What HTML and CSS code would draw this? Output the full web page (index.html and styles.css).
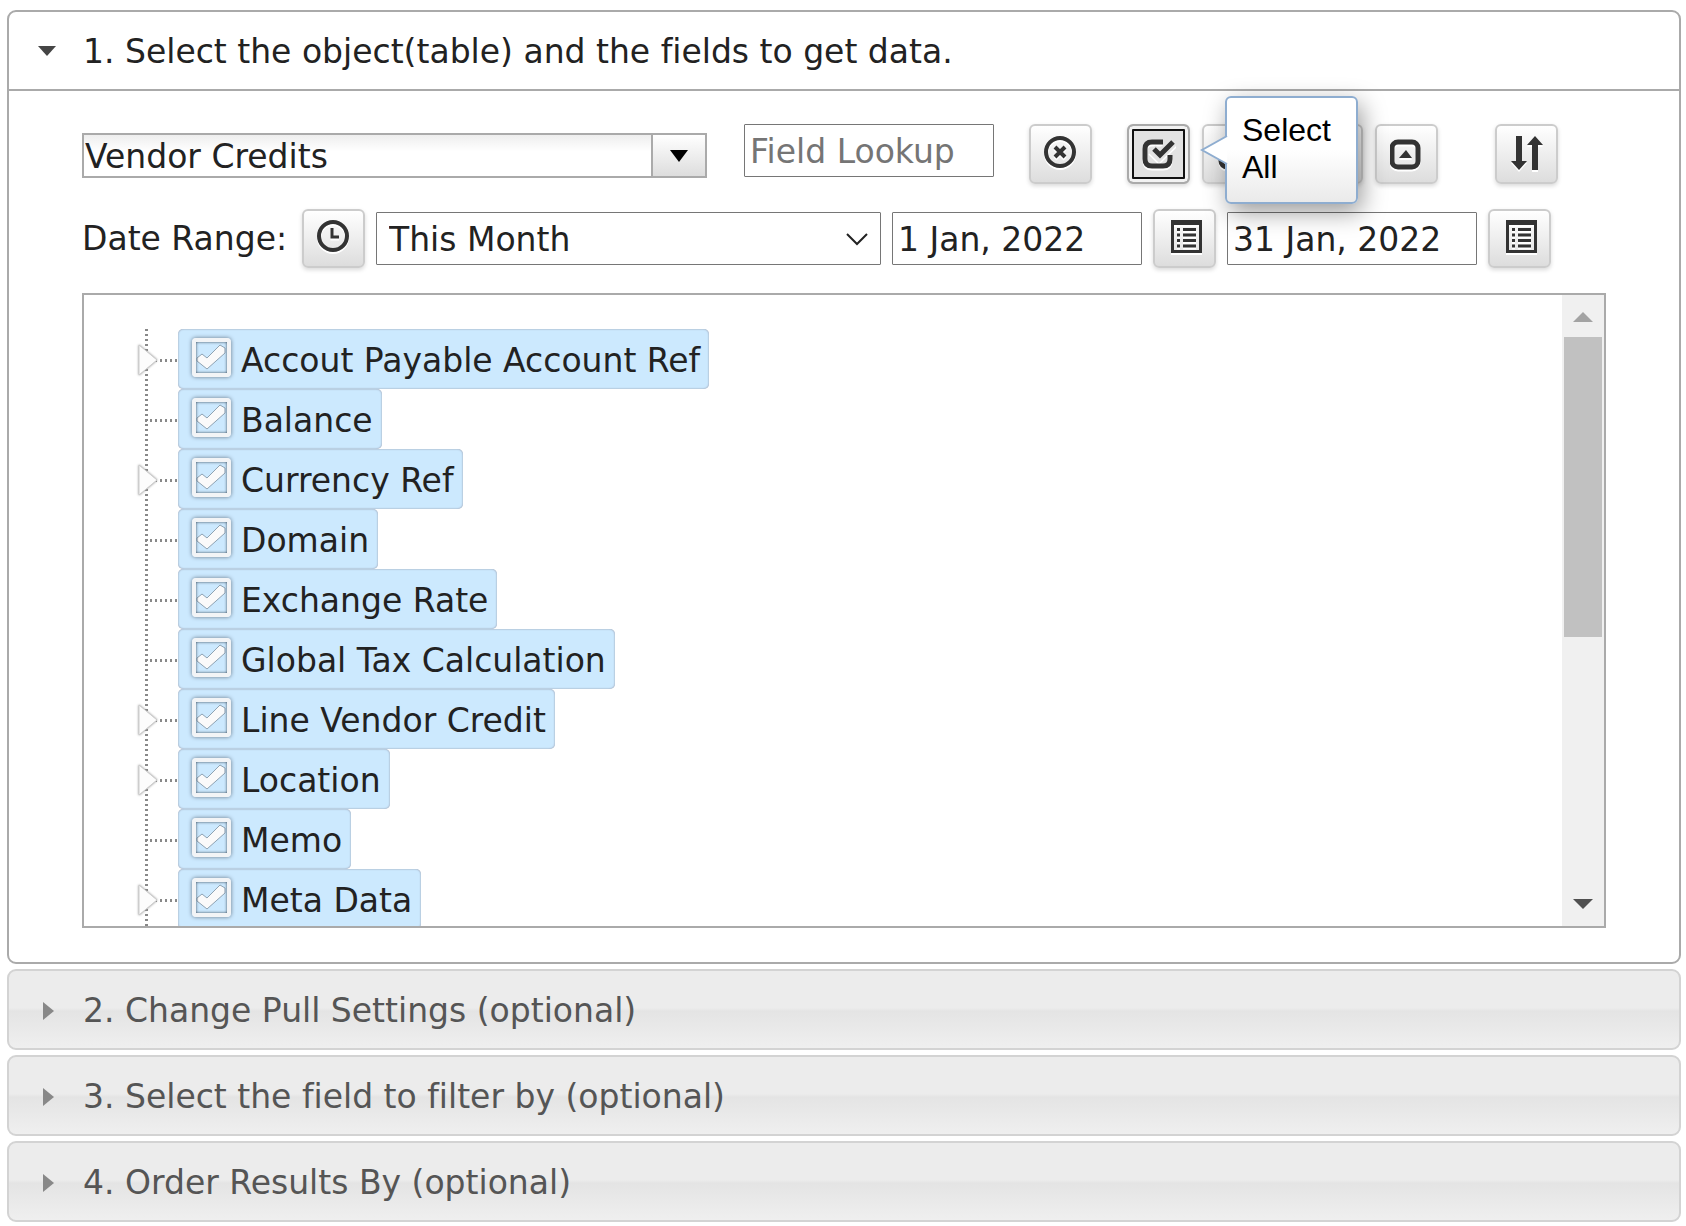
FILE: index.html
```html
<!DOCTYPE html>
<html lang="en">

<head>
    <meta charset="UTF-8">
    <meta name="viewport" content="width=device-width, initial-scale=1.0">
    <title>Get Data</title>
    <link rel="stylesheet" href="styles.css">
</head>

<body>
<div class="accordion">
    <section class="panel">
        <h3 class="head active">
            <button type="button" aria-expanded="true">
                <svg class="arrow" viewBox="0 0 20 20"><path d="M1 4h18l-9 10z"/></svg>
                1. Select the object(table) and the fields to get data.
            </button>
        </h3>
        <div class="content">
            <div class="row">
                <div class="combo">
                    <input type="text" value="Vendor Credits" aria-label="Object">
                    <button type="button" aria-label="Show objects">
                        <svg viewBox="0 0 18 12"><path d="M0 0h18L9 12z"/></svg>
                    </button>
                </div>
                <input class="text lookup" type="text" placeholder="Field Lookup" aria-label="Field Lookup">
                <button class="btn" type="button" aria-label="Clear lookup">
                    <svg class="icon" viewBox="0 0 34 34">
                        <circle cx="16" cy="16" r="14" fill="none" stroke="#333" stroke-width="4"/>
                        <path d="M11 11l10 10M21 11L11 21" stroke="#333" stroke-width="4"/>
                    </svg>
                </button>
                <div class="group">
                    <div class="tip_wrap">
                        <button class="btn focus" type="button" aria-label="Select All" aria-describedby="tip">
                            <svg class="icon" viewBox="0 0 34 34">
                                <path d="M21 6H10Q3 6 3 13v10q0 7 7 7h11q7 0 7-7v-4" fill="none" stroke="#333" stroke-width="5"/>
                                <path d="M10 13l7 7L32 5" fill="none" stroke="#e4e4e4" stroke-width="10"/>
                                <path d="M12 13l6 6L31 6" fill="none" stroke="#333" stroke-width="5"/>
                            </svg>
                        </button>
                        <div class="tip" id="tip" role="tooltip">
                            <svg viewBox="0 0 28 30"><path d="M27 1L2 15l25 14" fill="#fff" stroke="#8eadd0" stroke-width="2"/></svg>
                            Select All
                        </div>
                    </div>
                    <button class="btn" type="button" aria-label="Deselect All">
                        <svg class="icon" viewBox="0 0 34 34"><rect x="4" y="6" width="25" height="25" rx="6" fill="none" stroke="#333" stroke-width="5"/></svg>
                    </button>
                </div>
                <div class="group">
                    <button class="btn" type="button" aria-label="Expand All">
                        <svg class="icon" viewBox="0 0 34 34">
                            <rect x="4" y="6" width="25" height="25" rx="6" fill="none" stroke="#333" stroke-width="5"/>
                            <path d="M10 15h13l-6 8z" fill="#333"/>
                        </svg>
                    </button>
                    <button class="btn" type="button" aria-label="Collapse All">
                        <svg class="icon" viewBox="0 0 34 34">
                            <rect x="2" y="6" width="26" height="25" rx="6" fill="none" stroke="#333" stroke-width="5"/>
                            <path d="M9 22h13l-6-8z" fill="#333"/>
                        </svg>
                    </button>
                </div>
                <button class="btn sort" type="button" aria-label="Sort">
                    <svg class="icon" viewBox="0 0 34 34">
                        <path d="M6 0h6v25h5l-8 9-8-9h5zM22 34V9h-5l8-9 8 9h-5v25z" fill="#333"/>
                    </svg>
                </button>
            </div>
            <div class="row dates">
                <label for="range">Date Range:</label>
                <button class="btn low" type="button" aria-label="Time">
                    <svg class="icon" viewBox="0 0 34 34">
                        <circle cx="16" cy="16" r="14" fill="none" stroke="#333" stroke-width="4"/>
                        <path d="M15 8v9h7" fill="none" stroke="#333" stroke-width="3"/>
                    </svg>
                </button>
                <select class="text range" id="range">
                    <option>This Month</option>
                </select>
                <input class="text" type="text" value="1 Jan, 2022" aria-label="From">
                <button class="btn low" type="button" aria-label="Pick start date">
                    <svg class="icon" viewBox="0 0 34 34"><use href="#cal"/></svg>
                </button>
                <input class="text" type="text" value="31 Jan, 2022" aria-label="To">
                <button class="btn low" type="button" aria-label="Pick end date">
                    <svg class="icon" viewBox="0 0 34 34"><use href="#cal"/></svg>
                </button>
            </div>
            <div class="box">
                <ul class="tree"></ul>
                <div class="bar" aria-hidden="true">
                    <svg viewBox="0 0 20 10"><path d="M0 10h20L10 0z" fill="#a3a3a3"/></svg>
                    <div class="thumb"></div>
                    <svg viewBox="0 0 20 10"><path d="M0 0h20L10 10z" fill="#505050"/></svg>
                </div>
            </div>
        </div>
    </section>
    <h3 class="head">
        <button type="button" aria-expanded="false">
            <svg class="arrow" viewBox="0 0 20 20"><path d="M6 1v18l11-9z"/></svg>
            2. Change Pull Settings (optional)
        </button>
    </h3>
    <h3 class="head">
        <button type="button" aria-expanded="false">
            <svg class="arrow" viewBox="0 0 20 20"><path d="M6 1v18l11-9z"/></svg>
            3. Select the field to filter by (optional)
        </button>
    </h3>
    <h3 class="head">
        <button type="button" aria-expanded="false">
            <svg class="arrow" viewBox="0 0 20 20"><path d="M6 1v18l11-9z"/></svg>
            4. Order Results By (optional)
        </button>
    </h3>
</div>

<svg class="defs">
    <symbol id="cal" viewBox="0 0 34 34">
        <path d="M3 0h31v33H3zM6 5v25h25V5z" fill="#333" fill-rule="evenodd"/>
        <path d="M9 9.500h3M15 9.500h13M9 15h3M15 15h13M9 20.500h3M15 20.500h13M9 26h3M15 26h13" stroke="#333" stroke-width="3"/>
    </symbol>
</svg>

<script>
    let fields = [
        {name: 'Accout Payable Account Ref', parent: true},
        {name: 'Balance', parent: false},
        {name: 'Currency Ref', parent: true},
        {name: 'Domain', parent: false},
        {name: 'Exchange Rate', parent: false},
        {name: 'Global Tax Calculation', parent: false},
        {name: 'Line Vendor Credit', parent: true},
        {name: 'Location', parent: true},
        {name: 'Memo', parent: false},
        {name: 'Meta Data', parent: true}
    ]

    // only nodes with children get the toggle arrow
    let toggle = `<button class="toggle" type="button" aria-label="Expand">
        <svg viewBox="0 0 20 34"><path d="M1 2v30l18-15z"/></svg>
    </button>`

    function render(data) {
        let tree = document.querySelector(".tree");
        tree.innerHTML = '';
        data.forEach(item => {
            let li = document.createElement("li");
            li.innerHTML = `${item.parent ? toggle : ''}<label><input type="checkbox" checked>${item.name}</label>`;
            tree.appendChild(li);
        })
    }

    render(fields)
</script>
</body>

</html>
```
FILE: styles.css
```css
* {
    margin: 0;
    padding: 0;
    box-sizing: border-box;
}

body {
    padding: 10px 5px 4px 7px;
    background: #fff;
    color: #222;
}

body,
input,
select,
button {
    font-family: Verdana, "DejaVu Sans", sans-serif;
    font-size: 33px;
    font-variant-ligatures: none;
}

svg {
    display: block;
    flex: none;
}

.accordion {
    display: flex;
    flex-direction: column;
    gap: 5px;
}

.panel {
    border: 2px solid #aaa;
    border-radius: 9px;
}

.head {
    font-size: 33px;
    font-weight: normal;
}

.head button {
    display: flex;
    align-items: center;
    gap: 26px;
    width: 100%;
    height: 81px;
    padding: 2px 0 0 28px;
    border: 2px solid #d3d3d3;
    border-radius: 9px;
    background: linear-gradient(#ececec 0%, #ececec 48%, #e4e4e4 52%, #efefef 100%);
    color: #555;
    text-align: left;
}

.head.active button {
    height: 79px;
    border-width: 0 0 2px;
    border-color: #aaa;
    border-radius: 0;
    background: none;
    color: #222;
}

.arrow {
    width: 20px;
    height: 20px;
    fill: #888;
}

.active .arrow {
    fill: #454545;
}

.content {
    padding: 33px 73px 34px;
}

.row {
    display: flex;
    align-items: flex-start;
    height: 60px;
}

.combo {
    display: flex;
    width: 625px;
    height: 45px;
    margin: 9px 37px 0 0;
    border: 2px solid #aaa;
}

.combo input {
    flex: 1;
    min-width: 0;
    padding: 2px 0 0 1px;
    border: 0;
    background: linear-gradient(#eee, #fff 40%);
    color: #222;
}

.combo button {
    display: flex;
    align-items: center;
    justify-content: center;
    width: 54px;
    border: 0;
    border-left: 2px solid #aaa;
    background: linear-gradient(#fff, #ddd);
}

.combo svg {
    width: 18px;
    height: 12px;
}

.text {
    width: 250px;
    height: 53px;
    padding: 2px 4px 0 5px;
    border: 1px solid #767676;
    border-radius: 1px;
    background: #fff;
    color: #222;
}

.text::placeholder {
    color: #757575;
}

.lookup {
    margin-right: 35px;
}

.btn {
    display: flex;
    align-items: center;
    justify-content: center;
    width: 63px;
    height: 60px;
    padding-bottom: 2px;
    border: 2px solid #ccc;
    border-radius: 6px;
    background: linear-gradient(#fff, #ddd);
    box-shadow: 0 2px 4px rgba(0, 0, 0, .15);
}

.btn.focus {
    border-color: #aaa;
    background: #e2e2e2;
    box-shadow: inset 0 0 0 3px #f2f2f2, inset 0 0 0 5px #111, 0 2px 4px rgba(0, 0, 0, .15);
}

.icon {
    width: 34px;
    height: 34px;
    filter: drop-shadow(0 2px 0 #fff);
}

.group {
    display: flex;
    gap: 12px;
    margin-left: 35px;
}

.sort {
    margin-left: 57px;
}

.tip_wrap {
    position: relative;
}

.tip {
    position: absolute;
    z-index: 2;
    top: -28px;
    left: 98px;
    width: 133px;
    height: 108px;
    padding: 14px 15px;
    border: 2px solid #8eadd0;
    border-radius: 6px;
    background: linear-gradient(#fff 50%, #eaeaea);
    box-shadow: 4px 8px 24px rgba(0, 0, 0, .4);
    color: #000;
    font-family: Arial, "Liberation Sans", sans-serif;
    font-size: 32px;
    line-height: 37px;
}

/* pointer on the left edge of the tooltip */
.tip svg {
    position: absolute;
    top: 37px;
    left: -27px;
    width: 28px;
    height: 30px;
}

.dates {
    gap: 11px;
    height: 59px;
    margin-top: 25px;
}

.dates label {
    width: 209px;
    line-height: 60px;
    white-space: nowrap;
}

.dates .text {
    margin-top: 3px;
}

.btn.low {
    height: 59px;
    padding-bottom: 4px;
}

.text.range {
    width: 505px;
    padding-left: 12px;
    appearance: none;
    background: #fff url("data:image/svg+xml,%3Csvg xmlns='http://www.w3.org/2000/svg' width='22' height='14'%3E%3Cpath d='M1 2l10 10L21 2' fill='none' stroke='%23222' stroke-width='2'/%3E%3C/svg%3E") no-repeat right 12px center;
}

.box {
    display: flex;
    height: 635px;
    margin-top: 25px;
    border: 2px solid #aaa;
    overflow: hidden;
}

.tree {
    flex: 1;
    padding: 34px 0 0 61px;
    list-style: none;
}

.tree li {
    position: relative;
    display: flex;
    height: 60px;
    padding-left: 33px;
    background:
        repeating-linear-gradient(#888 0 2px, transparent 2px 5px) left top / 3px 100% no-repeat,
        repeating-linear-gradient(90deg, #888 0 2px, transparent 2px 5px) left 30px / 33px 3px no-repeat;
}

.tree label {
    display: flex;
    align-items: center;
    gap: 10px;
    height: 60px;
    padding: 2px 9px 0 14px;
    border-radius: 5px;
    background: #cce9fe;
    box-shadow: inset 0 0 2px #889;
    white-space: nowrap;
}

.tree input {
    width: 39px;
    height: 39px;
    margin-bottom: 5px;
    appearance: none;
    border: 4px solid #f2f4f6;
    border-radius: 4px;
    box-shadow: 0 0 4px #678, inset 0 0 3px #345;
}

.tree input:checked {
    background: url("data:image/svg+xml,%3Csvg xmlns='http://www.w3.org/2000/svg' width='31' height='31'%3E%3Cpath d='M1 16l5-4 5 4L24 3l5 3v5L11 27 1 19z' fill='%23fafafa' stroke='%238fa3b3'/%3E%3C/svg%3E") center no-repeat;
}

.toggle {
    position: absolute;
    top: 14px;
    left: -7px;
    border: 0;
    background: none;
}

.toggle svg {
    width: 20px;
    height: 34px;
    fill: #fcfcfc;
    stroke: #ccc;
    filter: drop-shadow(0 0 1px #999);
}

.bar {
    display: flex;
    flex-direction: column;
    align-items: center;
    width: 42px;
    padding: 17px 0;
    background: #f0f0f0;
}

.bar svg {
    width: 20px;
    height: 10px;
}

.thumb {
    width: 38px;
    height: 300px;
    margin: 15px 0 auto;
    background: #c1c1c1;
}

.defs {
    display: none;
}
```
